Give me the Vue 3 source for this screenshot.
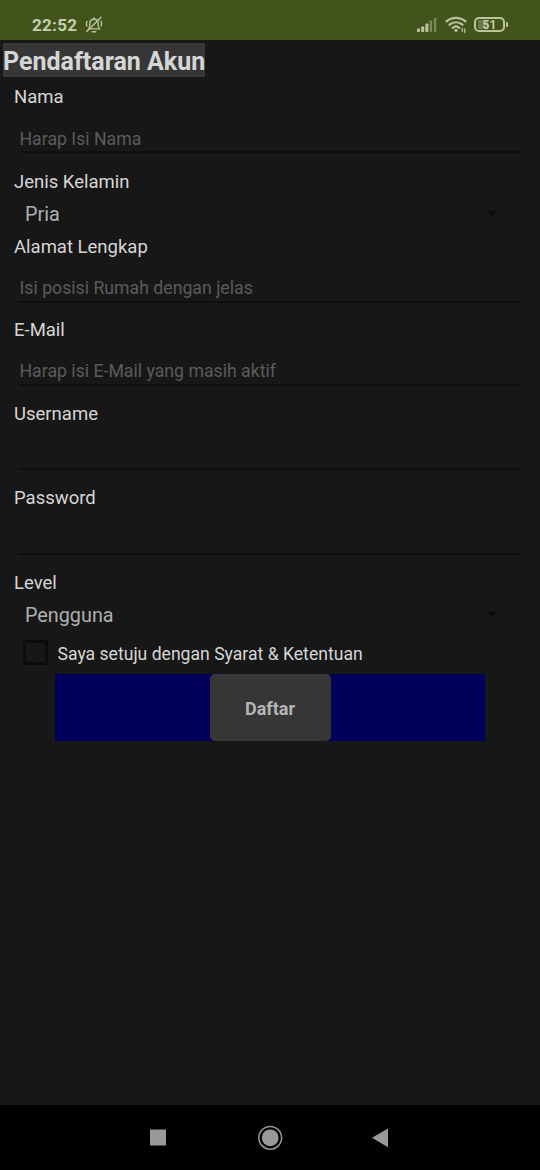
<script setup>
const fields = [
  { label: 'Nama', hint: 'Harap Isi Nama', h: 85 },
  { label: 'Jenis Kelamin', value: 'Pria', h: 65 },
  { label: 'Alamat Lengkap', hint: 'Isi posisi Rumah dengan jelas', h: 83 },
  { label: 'E-Mail', hint: 'Harap isi E-Mail yang masih aktif', h: 84 },
  { label: 'Username', hint: '', h: 84 },
  { label: 'Password', hint: '', h: 85 },
  { label: 'Level', value: 'Pengguna', h: 65 },
]
</script>

<template>
  <div class="screen">
    <header class="status">
      <span class="time">22:52</span>
      <svg class="bell" width="20" height="18" viewBox="0 0 20 18" fill="none" stroke="#bac5a0" stroke-width="1.4" stroke-linecap="round">
        <path d="M4.7 12.9c1.1-1 1.1-2.4 1.1-5 0-3 1.8-4.700 4.200-4.700s4.200 1.700 4.200 4.700c0 2.600.1 4 1.200 5z" />
        <path d="M8.200 15.700h3.600M10 3V1.600M17 1.200L2.800 15.400M2.900 5.500c-.7 1.500-.7 3 0 4.500M17.100 5.500c.7 1.500.7 3 0 4.500" />
      </svg>
      <div class="spacer"></div>
      <svg class="signal" width="20" height="16" viewBox="0 0 20 16">
        <g fill="#bac5a0">
          <rect x="0" y="11.500" width="3" height="3.500" rx=".7" />
          <rect x="4.200" y="9.500" width="3" height="5.500" rx=".7" />
          <rect x="8.400" y="6.500" width="3" height="8.500" rx=".7" />
        </g>
        <g fill="#7b8959">
          <rect x="12.700" y="3.500" width="2.400" height="11.500" rx=".7" />
          <rect x="16.900" y="1" width="2.400" height="14" rx=".7" />
        </g>
      </svg>
      <svg class="wifi" width="22" height="18" viewBox="0 0 22 18" fill="none" stroke="#bac5a0" stroke-width="2.200" stroke-linecap="round">
        <path d="M1.500 5.400C6.900.6 15.100.6 20.500 5.400M4.500 8.700c3.800-3.300 9.200-3.300 13 0M7.600 11.900c2-1.700 4.800-1.700 6.800 0" />
        <circle cx="11" cy="14.300" r="1.600" fill="#bac5a0" stroke="none" />
        <path d="M17.300 12.500v3M19.800 13v3.500" stroke-width="1.300" />
      </svg>
      <div class="battery"><i class="charge"></i><span>51</span><i class="tip"></i></div>
    </header>

    <main>
      <h1>Pendaftaran Akun</h1>
      <section v-for="f in fields" :key="f.label" class="field" :style="{ height: f.h + 'px' }">
        <label>{{ f.label }}</label>
        <div v-if="f.value" class="select">
          <span>{{ f.value }}</span>
          <svg width="12" height="7" viewBox="0 0 12 7"><path d="M.5 .5h11L6 6z" fill="#0a0a0a" /></svg>
        </div>
        <div v-else class="input">{{ f.hint }}</div>
      </section>
      <div class="agree">
        <span class="box"></span>
        <span>Saya setuju dengan Syarat &amp; Ketentuan</span>
      </div>
      <div class="actions"><button>Daftar</button></div>
    </main>

    <nav>
      <svg width="540" height="65" viewBox="0 0 540 65">
        <g fill="#999">
          <rect x="150" y="24.500" width="16" height="16" />
          <circle cx="270.200" cy="32.800" r="8.400" />
          <circle cx="270.200" cy="32.800" r="11.400" fill="none" stroke="#999" stroke-width="1.500" />
          <path d="M372 32.800L388 23.500v18.700z" />
        </g>
      </svg>
    </nav>
  </div>
</template>

<style>
body { background: #171717; }
</style>

<style scoped>
.screen {
  width: 540px;
  height: 1170px;
  display: flex;
  flex-direction: column;
  background: #171717;
  color: #d6d6d6;
  font-family: Roboto, sans-serif;
  overflow: hidden;
}
.status {
  height: 40px;
  box-sizing: border-box;
  flex: none;
  display: flex;
  align-items: flex-start;
  padding: 0 32px 0 32px;
  background: #43531c;
  color: #c6d0ae;
}
.time { font-size: 17px; font-weight: 700; line-height: 20px; margin-top: 15px; letter-spacing: 0.3px; width: 52px; }
.bell { margin-top: 16px; }
.spacer { flex: 1; }
.signal { margin: 17px 8px 0 0; }
.wifi { margin: 16px 7px 0 0; }
.battery {
  position: relative;
  width: 31px;
  height: 15px;
  box-sizing: border-box;
  margin: 17px 3px 0 0;
  border: 2px solid #bac5a0;
  border-radius: 5px;
  text-align: center;
  font-size: 12px;
  font-weight: 700;
  line-height: 12px;
}
.battery span { position: relative; }
.charge { position: absolute; left: 2px; top: 1px; width: 10px; height: 9px; background: #6c7b4c; border-radius: 1px; }
.tip { position: absolute; right: -5px; top: 3px; width: 2px; height: 5px; background: #bac5a0; border-radius: 1px; }
main { flex: 1; display: flex; flex-direction: column; align-items: stretch; }
h1 {
  align-self: flex-start;
  width: 202px;
  height: 34px;
  margin: 3px 0 8px 3px;
  background: #363636;
  font-size: 25px;
  font-weight: 700;
  line-height: 38px;
  white-space: nowrap;
}
.field { flex: none; display: flex; flex-direction: column; white-space: nowrap; }
label { height: 24px; line-height: 24px; font-size: 18.500px; margin-left: 14px; }
.input {
  height: 44px;
  box-sizing: border-box;
  margin: 0 20px 0 19px;
  padding: 17px 0 0 0.500px;
  border-bottom: 2px solid #0f0f0f;
  color: #5b5b5b;
  font-size: 17.700px;
  line-height: 24px;
}
.field:first-of-type .input { padding-top: 18px; }
.field:nth-of-type(6) .input { height: 45px; }
.select {
  height: 41px;
  display: flex;
  align-items: flex-start;
  justify-content: space-between;
  padding: 9px 42px 0 25px;
  box-sizing: border-box;
  color: #b0b0b0;
  font-size: 19.800px;
  line-height: 24px;
}
.select svg { margin-top: 7px; }
.agree { height: 38px; flex: none; display: flex; align-items: flex-start; font-size: 17.600px; line-height: 24px; padding-top: 5px; box-sizing: border-box; white-space: nowrap; }
.agree span:last-child { padding-top: 1px; }
.box { width: 25px; height: 25px; box-sizing: border-box; border: 3px solid #0c0c0c; border-radius: 2px; margin: -1px 9.500px 0 23px; }
.actions { height: 67px; width: 430px; margin-left: 55px; display: flex; justify-content: center; background: #00005a; }
button { width: 121px; height: 67px; padding: 2px 0 0; border: 0; border-radius: 5px; background: #363636; color: #b5b5b5; font: 700 18px Roboto, sans-serif; }
nav { flex: none; height: 65px; background: #000; }
nav svg { display: block; }
</style>
